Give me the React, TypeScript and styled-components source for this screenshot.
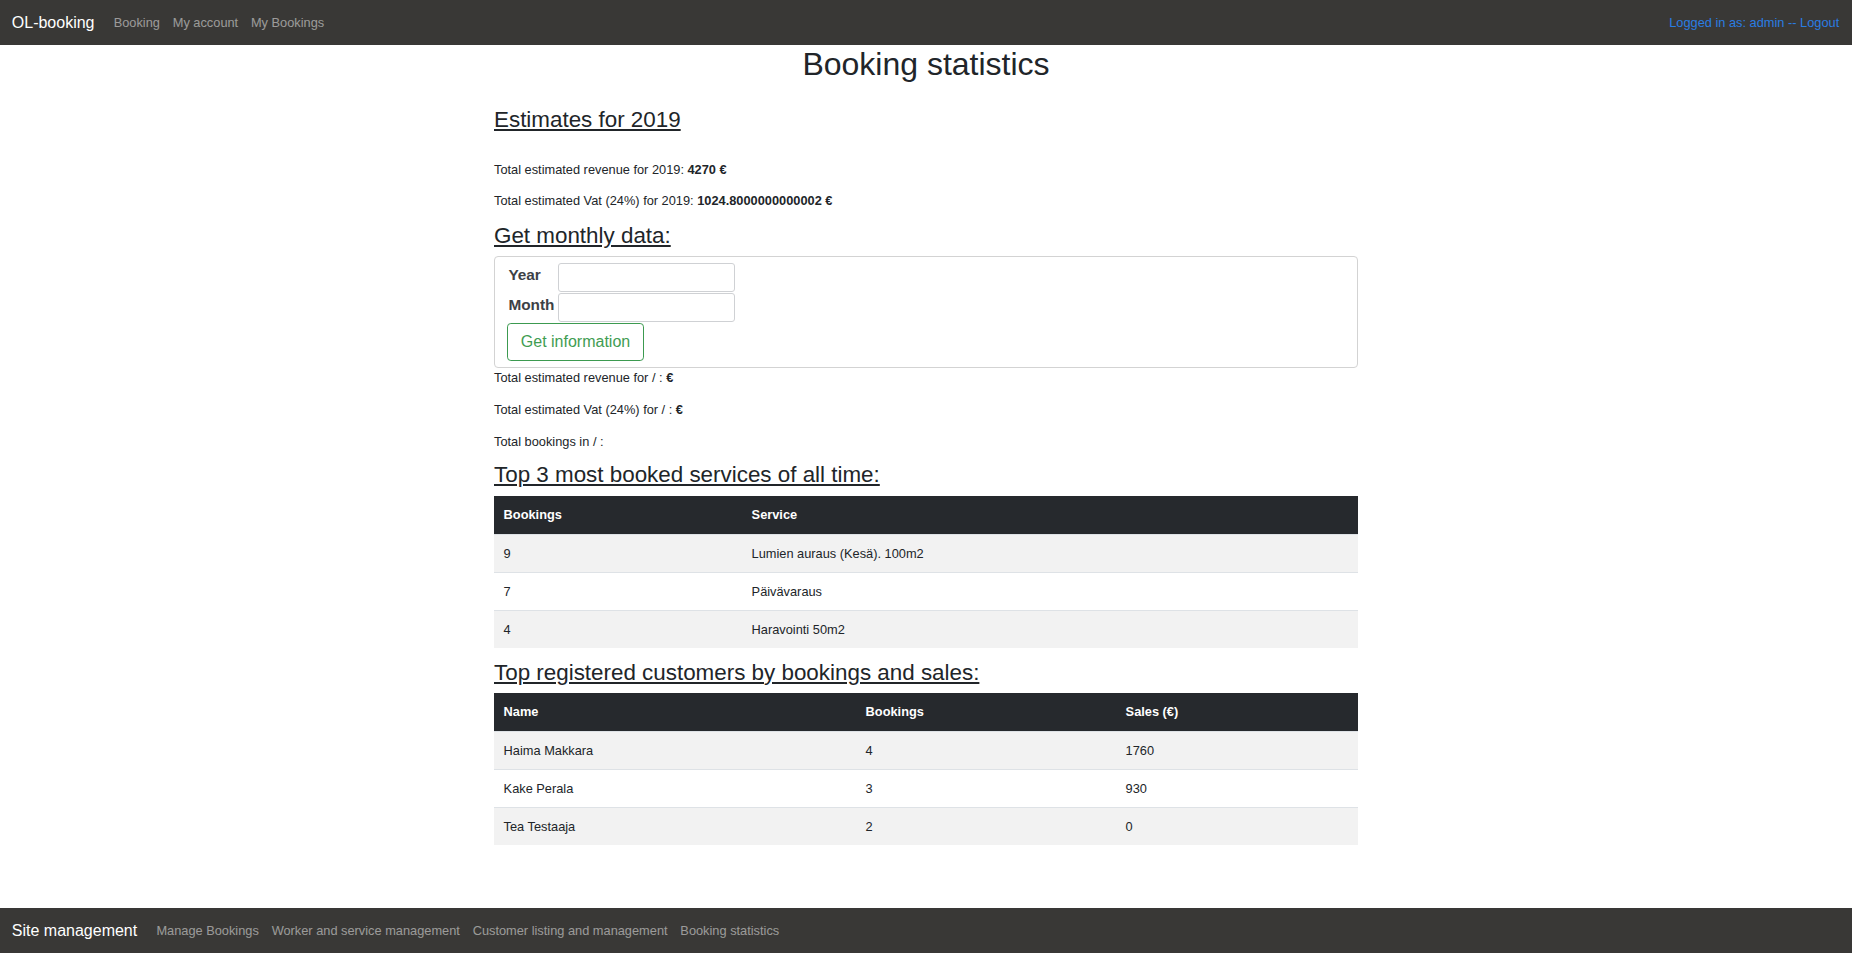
import React from "react";
import styled, { createGlobalStyle } from "styled-components";

const GlobalStyle = createGlobalStyle`
  html, body { margin: 0; padding: 0; }
  body {
    font-family: "Liberation Sans", Arial, Helvetica, sans-serif;
    color: #212529;
    background: #fff;
    font-size: 12.8px;
    line-height: 1.5;
  }
  * { box-sizing: border-box; }
`;

const Page = styled.div`
  min-height: 100vh;
  display: flex;
  flex-direction: column;
`;

const Bar = styled.nav`
  height: 45px;
  background: #393836;
  display: flex;
  align-items: center;
  padding: 0 12.8px 0 11.8px;
  flex-shrink: 0;
`;

const Brand = styled.span`
  color: #fff;
  font-size: 16px;
  line-height: 24px;
  margin-right: 12.8px;
  white-space: nowrap;
`;

const NavList = styled.div`
  display: flex;
  align-items: center;
`;

const NavLink = styled.span`
  color: rgba(255, 255, 255, 0.5);
  font-size: 12.8px;
  line-height: 19.2px;
  padding: 0 6.4px;
  white-space: nowrap;
`;

const Spacer = styled.div`
  flex: 1;
`;

const UserLink = styled.span`
  color: #2a7de2;
  font-size: 12.8px;
  line-height: 19.2px;
  white-space: nowrap;
`;

const Main = styled.main`
  flex: 1;
  width: 864px;
  margin: 0 auto;
  padding-bottom: 40px;
`;

const Title = styled.h1`
  font-size: 32px;
  font-weight: 400;
  line-height: 38.4px;
  text-align: center;
  margin: 0 0 24px;
`;

const Heading = styled.h3<{ $gap?: number }>`
  font-size: 22.4px;
  font-weight: 400;
  line-height: 26.88px;
  margin: 0 0 ${(p) => p.$gap ?? 6.4}px;
  text-decoration: underline;
  text-decoration-thickness: 1.5px;
  text-underline-offset: 2px;
`;

const Para = styled.p<{ $gap?: number }>`
  margin: 0 0 ${(p) => p.$gap ?? 12.8}px;
  font-size: 12.8px;
  line-height: 19.2px;
`;

const FormBox = styled.form`
  border: 1px solid #d3d3d3;
  border-radius: 4px;
  padding: 6px 12px 6px;
  display: flex;
  flex-direction: column;
  align-items: flex-start;
  gap: 1px;
`;

const FieldGrid = styled.div`
  display: grid;
  grid-template-columns: auto auto;
  column-gap: 3.5px;
  row-gap: 1px;
  align-items: start;
`;

const Label = styled.label`
  font-size: 15.36px;
  font-weight: 700;
  line-height: 23px;
  color: #3d4146;
  margin-left: 1.4px;
`;

const Input = styled.input`
  width: 177px;
  height: 29px;
  border: 1px solid #cfd1d4;
  border-radius: 3px;
  background: #fff;
  font-family: inherit;
  padding: 0 4px;
`;

const OutlineButton = styled.button`
  font-family: inherit;
  font-size: 16px;
  line-height: 24px;
  padding: 6.1px 12.8px;
  color: #3f9d52;
  background: transparent;
  border: 1px solid #3c9a50;
  border-radius: 3.84px;
  cursor: pointer;
`;

const Table = styled.table`
  width: 100%;
  border-collapse: collapse;
  margin-bottom: 12px;
  table-layout: fixed;
`;

const HeadCell = styled.th<{ $w?: number }>`
  width: ${(p) => (p.$w ? `${p.$w}px` : "auto")};
  background: #26292d;
  color: #fff;
  font-weight: 700;
  text-align: left;
  font-size: 12.8px;
  line-height: 19.2px;
  padding: 9.6px;
  height: 39px;
`;

const BodyRow = styled.tr`
  &:nth-child(odd) { background: #f2f2f2; }
`;

const Cell = styled.td`
  font-size: 12.8px;
  line-height: 19.2px;
  padding: 8.8px 9.6px;
  border-top: 1px solid #dee2e6;
`;

const services = [
  { n: "9", s: "Lumien auraus (Kesä). 100m2" },
  { n: "7", s: "Päivävaraus" },
  { n: "4", s: "Haravointi 50m2" },
];

const customers = [
  { name: "Haima Makkara", b: "4", s: "1760" },
  { name: "Kake Perala", b: "3", s: "930" },
  { name: "Tea Testaaja", b: "2", s: "0" },
];

export default function App() {
  return (
    <Page>
      <GlobalStyle />
      <Bar>
        <Brand>OL-booking</Brand>
        <NavList>
          <NavLink>Booking</NavLink>
          <NavLink>My account</NavLink>
          <NavLink>My Bookings</NavLink>
        </NavList>
        <Spacer />
        <UserLink>Logged in as: admin -- Logout</UserLink>
      </Bar>

      <Main>
        <Title>Booking statistics</Title>

        <Heading $gap={25.6}>Estimates for 2019</Heading>
        <Para $gap={12}>
          Total estimated revenue for 2019: <b>4270 €</b>
        </Para>
        <Para>
          Total estimated Vat (24%) for 2019: <b>1024.8000000000002 €</b>
        </Para>

        <Heading $gap={6}>Get monthly data:</Heading>
        <FormBox onSubmit={(e) => e.preventDefault()}>
          <FieldGrid>
            <Label>Year</Label>
            <Input type="text" />
            <Label>Month</Label>
            <Input type="text" />
          </FieldGrid>
          <OutlineButton type="submit">Get information</OutlineButton>
        </FormBox>
        <Para>
          Total estimated revenue for / : <b>€</b>
        </Para>
        <Para>
          Total estimated Vat (24%) for / : <b>€</b>
        </Para>
        <Para $gap={11}>Total bookings in / :</Para>

        <Heading>Top 3 most booked services of all time:</Heading>
        <Table>
          <thead>
            <tr>
              <HeadCell $w={248}>Bookings</HeadCell>
              <HeadCell>Service</HeadCell>
            </tr>
          </thead>
          <tbody>
            {services.map((r) => (
              <BodyRow key={r.s}>
                <Cell>{r.n}</Cell>
                <Cell>{r.s}</Cell>
              </BodyRow>
            ))}
          </tbody>
        </Table>

        <Heading>Top registered customers by bookings and sales:</Heading>
        <Table>
          <thead>
            <tr>
              <HeadCell $w={362}>Name</HeadCell>
              <HeadCell $w={260}>Bookings</HeadCell>
              <HeadCell>Sales (€)</HeadCell>
            </tr>
          </thead>
          <tbody>
            {customers.map((r) => (
              <BodyRow key={r.name}>
                <Cell>{r.name}</Cell>
                <Cell>{r.b}</Cell>
                <Cell>{r.s}</Cell>
              </BodyRow>
            ))}
          </tbody>
        </Table>
      </Main>

      <Bar as="footer">
        <Brand>Site management</Brand>
        <NavList>
          <NavLink>Manage Bookings</NavLink>
          <NavLink>Worker and service management</NavLink>
          <NavLink>Customer listing and management</NavLink>
          <NavLink>Booking statistics</NavLink>
        </NavList>
      </Bar>
    </Page>
  );
}
